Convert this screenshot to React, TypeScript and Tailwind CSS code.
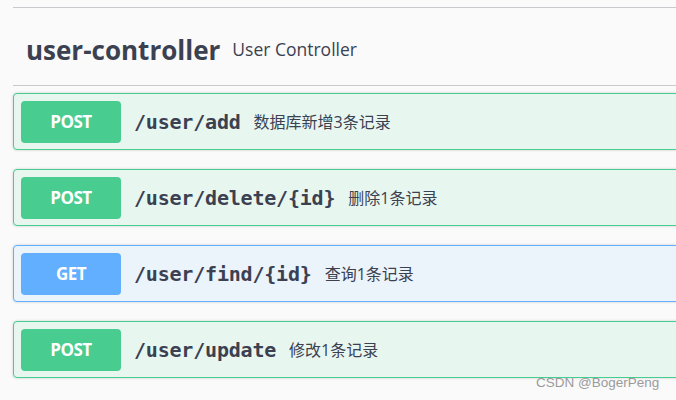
import React from "react";

type Op = { method: "POST" | "GET"; path: string; desc: string };

const ops: Op[] = [
  { method: "POST", path: "/user/add", desc: "数据库新增3条记录" },
  { method: "POST", path: "/user/delete/{id}", desc: "删除1条记录" },
  { method: "GET", path: "/user/find/{id}", desc: "查询1条记录" },
  { method: "POST", path: "/user/update", desc: "修改1条记录" },
];

function Block({ op }: { op: Op }) {
  const isGet = op.method === "GET";
  return (
    <div
      className={
        "h-[57px] mb-[19px] flex items-center pl-[7px] rounded-[4px] border shadow-[0_0_3px_rgba(0,0,0,0.19)] " +
        (isGet ? "border-[#61affe] bg-[#ebf3fb]" : "border-[#49cc90] bg-[#e8f6f0]")
      }
    >
      <div
        className={
          "w-[100px] h-[42px] rounded-[4px] flex items-center justify-center text-white text-[17px] tracking-[-0.5px] font-bold font-['Open_Sans',sans-serif] " +
          (isGet ? "bg-[#61affe]" : "bg-[#49cc90]")
        }
      >
        {op.method}
      </div>
      <div className="ml-[13px] text-[20px] font-bold text-[#3b4151] font-['DejaVu_Sans_Mono',monospace] tracking-[-0.2px]">
        {op.path}
      </div>
      <div className="ml-[13px] text-[16px] text-[#3b4151] font-['Open_Sans','Noto_Sans_CJK_SC',sans-serif]">
        {op.desc}
      </div>
    </div>
  );
}

export default function App() {
  return (
    <div className="relative h-[400px] w-[676px] overflow-hidden bg-[#fafafa] font-['Open_Sans',sans-serif]">
      <div className="pl-[13px] pt-[7px] w-[740px]">
        <div className="border-t border-[#c9cacd]" />
        <div className="h-[78px] flex items-center pl-[13px] pt-[7px] border-b border-[#c9cacd]">
          <span className="text-[26px] font-bold text-[#3b4151] leading-none">user-controller</span>
          <span className="ml-[12px] text-[17.5px] text-[#3b4151] leading-none">User Controller</span>
        </div>
        <div className="mt-[7px]">
          {ops.map((op) => (
            <Block key={op.path} op={op} />
          ))}
        </div>
      </div>
      <div className="absolute left-[536px] top-[376px] text-[13.5px] text-[#9a9a9a] font-['Liberation_Sans',sans-serif] leading-none">
        CSDN @BogerPeng
      </div>
    </div>
  );
}
